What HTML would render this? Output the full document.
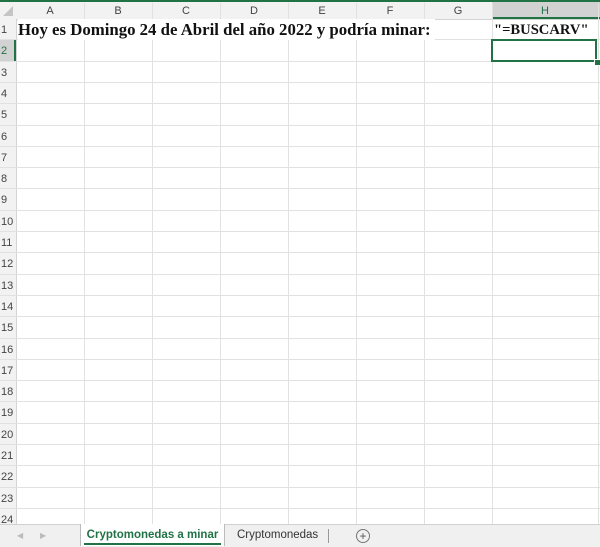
<!DOCTYPE html>
<html><head><style>
body{margin:0;width:600px;height:546px;overflow:hidden;background:#fff;font-family:"Liberation Sans",sans-serif;position:relative}
.a{position:absolute}
.hl{position:absolute;left:0;width:600px;height:1px;background:#e1e1e1}
.vl{position:absolute;top:3px;height:521px;width:1px;background:#e1e1e1}
.ch{position:absolute;top:3px;height:16px;font-size:11px;color:#444;text-align:center;line-height:16px}
.rh{position:absolute;left:0;width:15px;font-size:11px;color:#444;text-align:left;padding-left:1px}
</style></head><body>
<div class="a" style="left:0;top:0;width:600px;height:2px;background:#217346"></div>
<div class="a" style="left:0;top:2px;width:600px;height:17px;background:#f2f2f2;border-bottom:1px solid #d4d4d4"></div>
<div class="a" style="left:0;top:19px;width:16px;height:505px;background:#f2f2f2;border-right:1px solid #d4d4d4"></div>
<div class="a" style="left:492px;top:2px;width:108px;height:17px;background:#d2d2d2;border-bottom:2px solid #217346;box-sizing:border-box"></div>
<div class="a" style="left:0;top:40px;width:16px;height:21px;background:#d2d2d2;border-right:2px solid #217346;box-sizing:border-box"></div>
<div class="a" style="left:3px;top:6px;width:0;height:0;border-left:10px solid transparent;border-bottom:10px solid #c4c4c4"></div>
<div id="g"></div>
<script>
var g=document.getElementById('g'),h='';
var xs=[16,84,152,220,288,356,424,492,598],L='ABCDEFGH';
for(var i=1;i<xs.length;i++){h+='<div class="vl" style="left:'+xs[i]+'px"></div>';}
for(var i=0;i<8;i++){h+='<div class="ch" style="left:'+xs[i]+'px;width:'+(xs[i+1]-xs[i])+'px;'+(i==7?'color:#217346':'')+'">'+L[i]+'</div>';}
for(var r=1;r<=24;r++){var t=19+(r-1)*21.3;h+='<div class="hl" style="top:'+(t+20.3)+'px"></div>';h+='<div class="rh" style="top:'+t+'px;height:21px;line-height:22px;'+(r==2?'color:#217346':'')+'">'+r+'</div>';}
g.innerHTML=h;
</script>
<div class="a" style="left:18px;top:19px;height:21px;line-height:22px;font-family:'Liberation Serif',serif;font-weight:bold;font-size:16.8px;color:#111;white-space:nowrap;background:#fff;padding-right:4px">Hoy es Domingo 24 de Abril del año 2022 y podría minar:</div>
<div class="a" style="left:494px;top:19px;height:21px;line-height:22px;font-family:'Liberation Serif',serif;font-weight:bold;font-size:14.6px;color:#111;white-space:nowrap">"=BUSCARV"</div>
<div class="a" style="left:491px;top:39px;width:106px;height:23px;border:2px solid #217346;box-sizing:border-box"></div>
<div class="a" style="left:594px;top:59px;width:5px;height:5px;background:#217346;border:1px solid #fff"></div>
<div class="a" style="left:0;top:524px;width:600px;height:22px;background:#f0f0f0;border-top:1px solid #d0d0d0"></div>
<div class="a" style="left:17px;top:531px;font-size:8px;color:#bbb">◀</div>
<div class="a" style="left:40px;top:531px;font-size:8px;color:#bbb">▶</div>
<div class="a" style="left:80px;top:524px;width:145px;height:22px;background:#fff;border-left:1px solid #bbb;border-right:1px solid #bbb;box-sizing:border-box"></div>
<div class="a" style="left:84px;top:524px;width:137px;height:21px;line-height:23px;font-size:11.5px;font-weight:bold;color:#217346;text-align:center;white-space:nowrap;border-bottom:2px solid #217346;box-sizing:border-box">Cryptomonedas a minar</div>
<div class="a" style="left:237px;top:524px;line-height:23px;font-size:11.5px;color:#333;white-space:nowrap">Cryptomonedas</div>
<div class="a" style="left:328px;top:529px;width:1px;height:14px;background:#999"></div>
<div class="a" style="left:356px;top:529px;width:12px;height:12px;border:1px solid #777;border-radius:50%;text-align:center;line-height:12px;font-size:12px;color:#555">+</div>
</body></html>
